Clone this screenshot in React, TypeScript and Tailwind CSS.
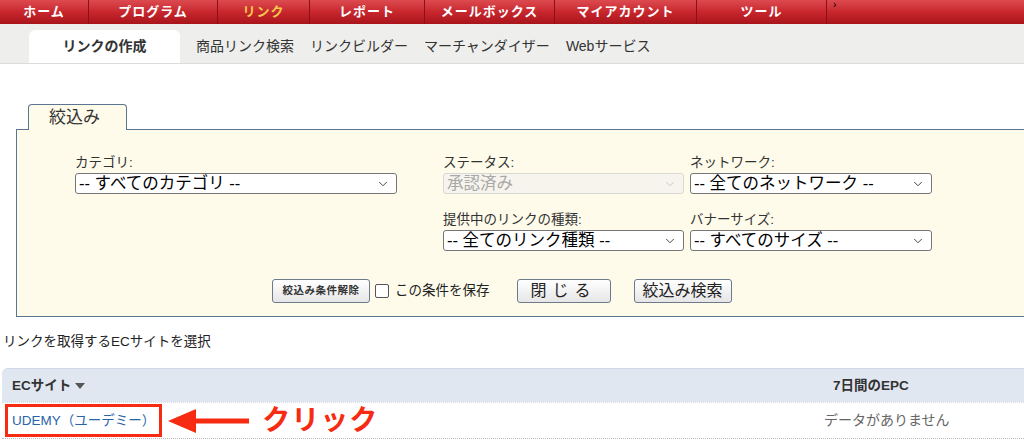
import React from 'react';
import { ChevronDown } from 'lucide-react';

const font = { fontFamily: '"Liberation Sans", "Noto Sans CJK JP", sans-serif' };

const navItems = [
  { label: 'ホーム', w: 'w-[89px]' },
  { label: 'プログラム', w: 'w-[129px]' },
  { label: 'リンク', w: 'w-[92px]', active: true },
  { label: 'レポート', w: 'w-[115px]' },
  { label: 'メールボックス', w: 'w-[130px]' },
  { label: 'マイアカウント', w: 'w-[142px]' },
  { label: 'ツール', w: 'w-[130px]' },
];

const subItems = ['商品リンク検索', 'リンクビルダー', 'マーチャンダイザー', 'Webサービス'];

const FakeSelect: React.FC<{ value: string; w: string; disabled?: boolean }> = ({ value, w, disabled }) => (
  <div
    className={`${w} h-[21px] flex items-center justify-between pl-[3px] pr-[6px] rounded-[3px] border text-[16.5px] ${
      disabled ? 'border-[#d8d8d4] bg-[#f6f4ec] text-[#a8a8a8]' : 'border-[#767676] bg-white text-black'
    }`}
  >
    <span className="leading-none">{value}</span>
    <ChevronDown size={14} strokeWidth={1.7} className={disabled ? 'text-[#c8c8c8]' : 'text-[#444]'} />
  </div>
);

const Field: React.FC<{ label: string; children: React.ReactNode }> = ({ label, children }) => (
  <div className="flex flex-col gap-[3px]">
    <span className="text-[13.5px] text-[#333] leading-[14px]">{label}</span>
    {children}
  </div>
);

const App: React.FC = () => {
  return (
    <div className="w-[1024px] h-[440px] overflow-hidden bg-white" style={font}>
      {/* top nav */}
      <div className="h-[24px] flex bg-gradient-to-b from-[#dc4a50] via-[#c8262d] to-[#a9141b]">
        {navItems.map((n) => (
          <div
            key={n.label}
            className={`${n.w} h-full flex items-center justify-center border-r border-[#8e1016] text-[13px] font-bold tracking-[1px] ${
              n.active ? 'text-[#f6c94a]' : 'text-white'
            }`}
          >
            {n.label}
          </div>
        ))}
        <div className="flex-1 relative">
          <span className="absolute left-[6px] top-0 text-[10px] leading-[10px] text-black">›</span>
        </div>
      </div>

      {/* sub nav */}
      <div className="h-[40px] bg-[#eeeeec] border-b border-[#dcdcd8] flex items-end pl-[29px]">
        <div className="w-[151px] h-[33px] bg-white rounded-t-[6px] flex items-center justify-center text-[14px] font-bold text-[#333]">
          リンクの作成
        </div>
        <div className="h-[33px] flex items-center gap-[16px] pl-[16px] text-[14px] text-[#333]">
          {subItems.map((s) => (
            <span key={s}>{s}</span>
          ))}
        </div>
      </div>

      {/* filter box */}
      <div className="pt-[40px] pl-[16px]">
        <div className="ml-[12px] w-[99px] h-[26px] border border-b-0 border-[#5a7590] rounded-t-[4px] bg-[#fffbea] flex items-center pl-[20px] text-[17px] text-[#333] relative z-10 mb-[-1px]">
          絞込み
        </div>
        <div className="h-[188px] border border-r-0 border-[#5a7590] bg-[#fefbea] pt-[26px] pl-[58px] flex flex-col">
          <div className="flex">
            <div className="w-[368px]">
              <Field label="カテゴリ:">
                <FakeSelect value="-- すべてのカテゴリ --" w="w-[322px]" />
              </Field>
            </div>
            <div className="flex flex-col gap-[19px]">
              <div className="flex gap-[6px]">
                <Field label="ステータス:">
                  <FakeSelect value="承認済み" w="w-[241px]" disabled />
                </Field>
                <Field label="ネットワーク:">
                  <FakeSelect value="-- 全てのネットワーク --" w="w-[242px]" />
                </Field>
              </div>
              <div className="flex gap-[6px]">
                <Field label="提供中のリンクの種類:">
                  <FakeSelect value="-- 全てのリンク種類 --" w="w-[241px]" />
                </Field>
                <Field label="バナーサイズ:">
                  <FakeSelect value="-- すべてのサイズ --" w="w-[242px]" />
                </Field>
              </div>
            </div>
          </div>
          <div className="flex items-center mt-[28px] ml-[197px]">
            <div className="w-[98px] h-[24px] border border-[#6d7a8c] rounded-[3px] bg-gradient-to-b from-white to-[#e6e6e6] flex items-center justify-center text-[10.5px] font-bold tracking-[0.5px] text-[#333]">
              絞込み条件解除
            </div>
            <div className="ml-[5px] w-[14px] h-[14px] border border-[#555] rounded-[2px] bg-white" />
            <span className="ml-[6px] text-[13.5px] text-[#222]">この条件を保存</span>
            <div className="ml-[27px] w-[94px] h-[24px] border border-[#6d7a8c] rounded-[3px] bg-gradient-to-b from-white to-[#e6e6e6] flex items-center justify-center text-[16px] tracking-[6px] text-[#222]">
              閉じる
            </div>
            <div className="ml-[23px] w-[98px] h-[24px] border border-[#6d7a8c] rounded-[3px] bg-gradient-to-b from-white to-[#e6e6e6] flex items-center justify-center text-[16px] text-[#222]">
              絞込み検索
            </div>
          </div>
        </div>
      </div>

      {/* EC site list */}
      <div className="pl-[3px] pt-[15px] text-[13.5px] text-[#222]">リンクを取得するECサイトを選択</div>
      <div className="mt-[16px] ml-[2px]">
        <div className="h-[34px] bg-[#e1e7f1] rounded-tl-[6px] border-t border-[#cfd8e6] flex items-center text-[13.5px] font-bold text-[#333]">
          <div className="w-[831px] pl-[10px] flex items-center gap-[4px]">
            ECサイト
            <svg width="10" height="6" viewBox="0 0 10 6">
              <path d="M0 0h10L5 6z" fill="#555" />
            </svg>
          </div>
          <div>7日間のEPC</div>
        </div>
        <div className="h-[37px] flex items-center border-t border-[#d6dce6] border-b border-dotted border-b-[#bbbbbb]">
          <div className="w-[831px] flex items-center">
            <div className="ml-[3px] border-[3px] border-[#f62b12] px-[4px] h-[33px] flex items-center text-[13.5px] text-[#2a64a8]">
              UDEMY（ユーデミー）
            </div>
            <svg width="82" height="26" viewBox="0 0 82 26" className="ml-[6px]">
              <path d="M0 13 L28 1 L28 10.5 L81 10.5 L81 15.5 L28 15.5 L28 25 Z" fill="#f62b12" />
            </svg>
            <span className="ml-[12px] text-[28px] font-bold text-[#f62b12] tracking-[1px] leading-none">クリック</span>
          </div>
          <span className="text-[14px] text-[#666] ml-[-9px]">データがありません</span>
        </div>
      </div>
    </div>
  );
};

export default App;
